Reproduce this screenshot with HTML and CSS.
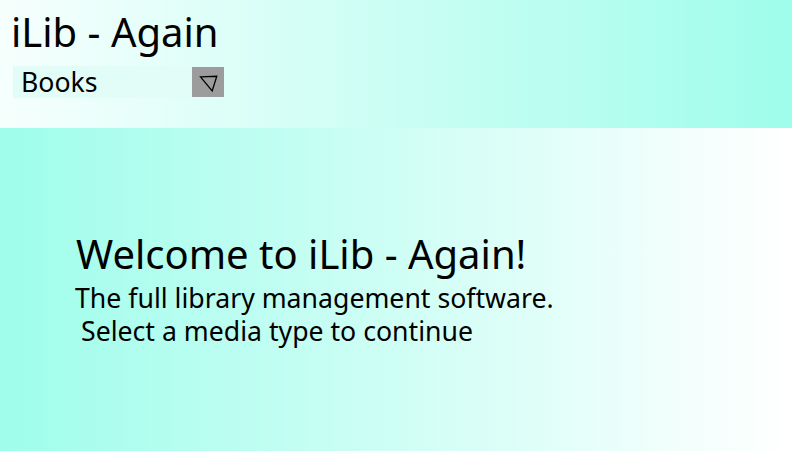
FILE: index.html
```html
<!DOCTYPE html>
<html>
<head>
<meta charset="utf-8">
<link rel="stylesheet" href="styles.css">
</head>
<body>
<header class="header">
  <h1 class="title">iLib - Again</h1>
  <div class="select">
    <span class="select-value">Books</span>
    <span class="select-button"><svg class="select-icon" width="32" height="30" viewBox="0 0 32 30"><polygon points="8.5,9.8 24.8,9.3 20.2,24" fill="none" stroke="#000" stroke-width="1.3" stroke-linejoin="miter"/></svg></span>
  </div>
</header>
<main class="main">
  <div class="welcome">
    <h2 class="welcome-title">Welcome to iLib - Again!</h2>
    <p class="welcome-line">The full library management software.</p>
    <p class="welcome-line welcome-indent">Select a media type to continue</p>
  </div>
</main>
</body>
</html>
```

FILE: styles.css
```css
* { box-sizing: border-box; }
html, body { margin: 0; padding: 0; height: 100%; }
body {
  font-family: "Noto Sans", sans-serif;
  color: #000;
  display: flex;
  flex-direction: column;
}
.header {
  flex: 0 0 128px;
  height: 128px;
  background: linear-gradient(to right, #f6fffd, #9ffdeb);
  padding: 4px 0 0 11px;
}
.title {
  margin: 0;
  font-size: 40px;
  font-weight: 400;
  line-height: normal;
}
.select {
  margin: 7px 0 0 2px;
  width: 211px;
  height: 32px;
  background: #e2fdf8;
  display: flex;
  align-items: center;
  justify-content: space-between;
}
.select-value {
  padding-left: 8px;
  font-size: 26.67px;
  line-height: 32px;
}
.select-button {
  width: 32px;
  height: 30px;
  background: #9c9c9c;
  display: block;
}
.select-icon { display: block; }
.main {
  flex: 1;
  background: linear-gradient(to right, #9ffdeb, #ffffff);
  padding: 98px 0 0 76px;
}
.welcome-title {
  margin: 0;
  font-size: 40px;
  font-weight: 400;
  line-height: normal;
}
.welcome-line {
  margin: 0;
  font-size: 26.67px;
  line-height: 33px;
  margin-left: -1px;
}
.welcome-indent { padding-left: 6px; }
```
